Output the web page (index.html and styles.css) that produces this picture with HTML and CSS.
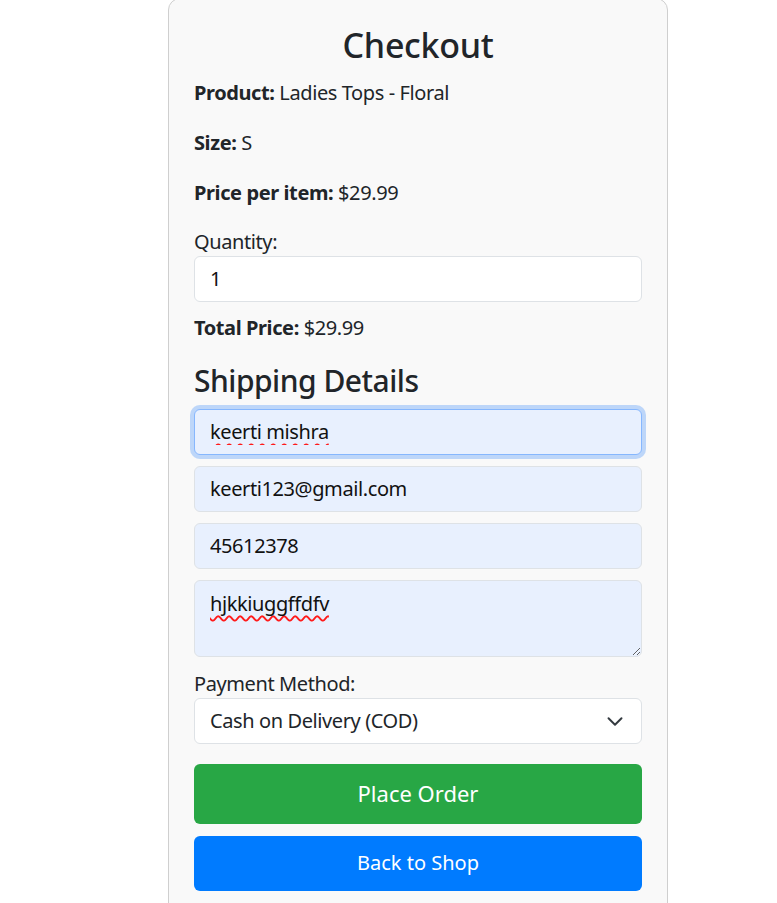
FILE: index.html
```html
<!DOCTYPE html>
<html lang="en">
<head>
<meta charset="utf-8">
<title>Checkout</title>
<link rel="stylesheet" href="styles.css">
</head>
<body>
<div class="card">
  <h2 class="title">Checkout</h2>
  <p class="info"><strong>Product:</strong> Ladies Tops - Floral</p>
  <p class="info"><strong>Size:</strong> S</p>
  <p class="info"><strong>Price per item:</strong> $29.99</p>
  <label class="label" for="qty">Quantity:</label>
  <input class="field" id="qty" type="number" value="1">
  <p class="info total"><strong>Total Price:</strong> $29.99</p>
  <h4 class="section">Shipping Details</h4>
  <input class="field autofill focused misspelled" type="text" value="keerti mishra">
  <input class="field autofill" type="email" value="keerti123@gmail.com">
  <input class="field autofill" type="text" value="45612378">
  <textarea class="field autofill area misspelled" rows="2">hjkkiuggffdfv</textarea>
  <label class="label" for="pay">Payment Method:</label>
  <div class="select-wrap">
    <select class="field select" id="pay">
      <option>Cash on Delivery (COD)</option>
    </select>
    <svg class="chevron" width="18" height="13" viewBox="0 0 16 12" aria-hidden="true"><path d="M2 3l6 6 6-6" fill="none" stroke="#343a40" stroke-width="1.8" stroke-linecap="round" stroke-linejoin="round"/></svg>
  </div>
  <button class="btn btn-green" type="button">Place Order</button>
  <button class="btn btn-blue" type="button">Back to Shop</button>
</div>
</body>
</html>
```
FILE: styles.css
```css
html, body {
  margin: 0;
  padding: 0;
  background: #ffffff;
}
body {
  font-family: "Noto Sans", "Open Sans", sans-serif;
  font-size: 20px;
  line-height: 1.5;
  color: #212529;
  letter-spacing: -0.4px;
}
.card {
  box-sizing: border-box;
  width: 500px;
  margin: -2px 0 0 168px;
  padding: 26px 25px 40px;
  background: #f9f9f9;
  border: 1px solid #cfcfcf;
  border-radius: 12px;
}
.title {
  margin: 0 0 12px;
  font-size: 34px;
  font-weight: 500;
  line-height: 1.2;
  text-align: center;
  letter-spacing: -0.3px;
}
.info {
  margin: 0 0 20px;
}
.info strong {
  font-weight: 700;
}
.total {
  margin-top: 11px;
}
.label {
  display: block;
  line-height: 28px;
}
.section {
  margin: 0 0 10px;
  font-size: 30px;
  font-weight: 500;
  line-height: 1.2;
  letter-spacing: -0.5px;
}
.field {
  display: block;
  box-sizing: border-box;
  width: 100%;
  height: 46px;
  margin: 0 0 11px;
  padding: 0 15px;
  font-family: inherit;
  font-size: 20px;
  letter-spacing: -0.4px;
  color: #111;
  background: #ffffff;
  border: 1px solid #dee2e6;
  border-radius: 6px;
  outline: none;
}
#qty {
  margin-bottom: 0;
  -moz-appearance: textfield;
}
#qty::-webkit-inner-spin-button,
#qty::-webkit-outer-spin-button {
  -webkit-appearance: none;
  margin: 0;
}
.autofill {
  background: #e8f0fe;
}
.focused {
  border-color: #86b7fe;
  box-shadow: 0 0 0 4px rgba(13, 110, 253, 0.25);
}
.misspelled {
  text-decoration-line: underline;
  text-decoration-style: wavy;
  text-decoration-color: #ff1a1a;
  text-decoration-thickness: 1.5px;
  text-underline-offset: 4px;
  text-decoration-skip-ink: none;
}
.area {
  height: 77px;
  margin-bottom: 13px;
  padding: 8px 15px;
  line-height: 1.5;
  resize: both;
}
.select-wrap {
  position: relative;
}
.select {
  -webkit-appearance: none;
  appearance: none;
  margin-bottom: 0;
  color: #212529;
  background: #ffffff;
}
.chevron {
  position: absolute;
  right: 18px;
  top: 17px;
  pointer-events: none;
}
.btn {
  display: block;
  width: 100%;
  border: 0;
  border-radius: 6px;
  color: #ffffff;
  font-family: inherit;
  line-height: 1.5;
  text-align: center;
}
.btn-green {
  height: 60px;
  margin-top: 20px;
  font-size: 22px;
  background: #28a745;
}
.btn-blue {
  height: 55px;
  margin-top: 12px;
  font-size: 20px;
  background: #007bff;
}
```
